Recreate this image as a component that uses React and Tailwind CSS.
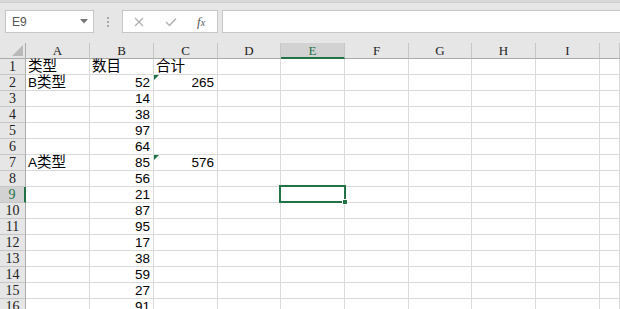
import React from "react";

const COLS = ["A", "B", "C", "D", "E", "F", "G", "H", "I", ""];
const WIDTHS = [
  "w-[64px]",
  "w-[64px]",
  "w-[64px]",
  "w-[63px]",
  "w-[64px]",
  "w-[64px]",
  "w-[63px]",
  "w-[64px]",
  "w-[64px]",
  "flex-1",
];

// sheet data: [A, B, C, flag on C]
const ROWS = [
  ["类型", "数目", "合计"],
  ["B类型", "52", "265", true],
  ["", "14"],
  ["", "38"],
  ["", "97"],
  ["", "64"],
  ["A类型", "85", "576", true],
  ["", "56"],
  ["", "21"],
  ["", "87"],
  ["", "95"],
  ["", "17"],
  ["", "38"],
  ["", "59"],
  ["", "27"],
  ["", "91"],
];

const cellFont = { fontFamily: '"Liberation Sans", "Noto Sans CJK SC", sans-serif' };
const headFont = { fontFamily: '"Liberation Serif", "Noto Sans CJK SC", serif' };

// CJK glyphs a touch larger than latin, like SimSun in the sheet
function CellText({ v }) {
  const parts = v.match(/[\u4e00-\u9fff]+|[^\u4e00-\u9fff]+/g) || [];
  return (
    <span className="whitespace-nowrap">
      {parts.map((p, i) =>
        /[\u4e00-\u9fff]/.test(p) ? (
          <span key={i} className="text-[14.5px]">{p}</span>
        ) : (
          <span key={i}>{p}</span>
        )
      )}
    </span>
  );
}

function Toolbar() {
  return (
    <div className="h-[43px] bg-[#e6e6e6] flex flex-col">
      <div className="h-[3px] bg-[#d9d9d9] border-b border-[#cfcfcf]" />
      <div className="flex items-start pt-[7px]">
        {/* name box */}
        <div className="ml-[5px] w-[89px] h-[23px] bg-white border border-[#c6c6c6] flex items-center justify-between pl-[6px] pr-[5px]">
          <span className="text-[12px] text-[#555]" style={cellFont}>E9</span>
          <svg width="8" height="5" viewBox="0 0 8 5">
            <path d="M0 0 L8 0 L4 4.5 Z" fill="#777" />
          </svg>
        </div>
        {/* splitter dots */}
        <div className="w-[28px] h-[23px] flex flex-col items-center justify-center gap-[2px]">
          <span className="w-[2px] h-[2px] bg-[#a8a8a8]" />
          <span className="w-[2px] h-[2px] bg-[#a8a8a8]" />
          <span className="w-[2px] h-[2px] bg-[#a8a8a8]" />
        </div>
        {/* cancel / enter / fx */}
        <div className="w-[96px] h-[23px] bg-white border border-[#c6c6c6] flex items-center">
          <svg className="ml-[11px]" width="10" height="10" viewBox="0 0 10 10">
            <path d="M1 1 L9 9 M9 1 L1 9" stroke="#b0b0b0" strokeWidth="1.2" />
          </svg>
          <svg className="ml-[21px]" width="12" height="10" viewBox="0 0 12 10">
            <path d="M1 5 L4.5 8.5 L11 1.5" stroke="#b0b0b0" strokeWidth="1.4" fill="none" />
          </svg>
          <span
            className="ml-[20px] text-[13px] italic text-[#555] leading-none"
            style={{ fontFamily: '"Liberation Serif", serif' }}
          >
            f<span className="text-[10px]">x</span>
          </span>
        </div>
        <div className="ml-[4px] flex-1 h-[23px] bg-white border border-[#c6c6c6] border-r-0" />
      </div>
    </div>
  );
}

function HeaderRow() {
  return (
    <div className="flex h-[16px] bg-[#e6e6e6]">
      <div className="w-[26px] border-r border-b border-[#ababab] relative">
        <svg className="absolute left-[12px] top-[2px]" width="11" height="11" viewBox="0 0 11 11">
          <path d="M11 0 L11 11 L0 11 Z" fill="#b9b9b9" />
        </svg>
      </div>
      {COLS.map((c, i) => {
        const sel = c === "E";
        return (
          <div
            key={i}
            className={`${WIDTHS[i]} flex items-center justify-center text-[13px] leading-none ${
              sel
                ? "bg-[#d2d2d2] text-[#217346] border-b-2 border-b-[#217346] border-r border-r-[#c6c6c6]"
                : "text-[#222] border-b border-b-[#ababab] border-r border-r-[#c6c6c6]"
            }`}
            style={headFont}
          >
            {c}
          </div>
        );
      })}
    </div>
  );
}

function Row({ n, data }) {
  const [a = "", b = "", c = "", flag] = data;
  const sel = n === 9;
  return (
    <div className="flex h-[16px]">
      <div
        className={`w-[26px] flex items-end justify-center text-[14px] leading-[15px] border-b border-b-[#c6c6c6] ${
          sel
            ? "bg-[#d2d2d2] text-[#217346] border-r-2 border-r-[#217346]"
            : "bg-[#e6e6e6] text-[#222] border-r border-r-[#ababab]"
        }`}
        style={headFont}
      >
        {n}
      </div>
      {COLS.map((col, i) => {
        let v = "";
        if (i === 0) v = a;
        if (i === 1) v = b;
        if (i === 2) v = c;
        const num = /^\d+$/.test(v) && n > 1;
        return (
          <div
            key={i}
            className={`${WIDTHS[i]} relative flex items-end border-r border-b border-[#dadada] text-[13.5px] leading-[15px] text-black ${
              num ? "justify-end pr-[3px]" : "justify-start pl-[2px]"
            }`}
            style={cellFont}
          >
            {i === 2 && flag && (
              <span className="absolute left-0 top-0 w-0 h-0 border-t-[5px] border-t-[#1e7145] border-r-[5px] border-r-transparent" />
            )}
            <CellText v={v} />
          </div>
        );
      })}
    </div>
  );
}

export default function App() {
  return (
    <div className="w-[620px] h-[309px] overflow-hidden bg-white select-none">
      <Toolbar />
      <div className="relative">
        <HeaderRow />
        {ROWS.map((r, i) => (
          <Row key={i} n={i + 1} data={r} />
        ))}
        {/* active cell E9 */}
        <div className="absolute left-[279px] top-[142px] w-[67px] h-[18px] border-2 border-[#217346]">
          <span className="absolute right-[-4px] bottom-[-4px] w-[6px] h-[6px] bg-[#217346] border border-white" />
        </div>
      </div>
    </div>
  );
}
